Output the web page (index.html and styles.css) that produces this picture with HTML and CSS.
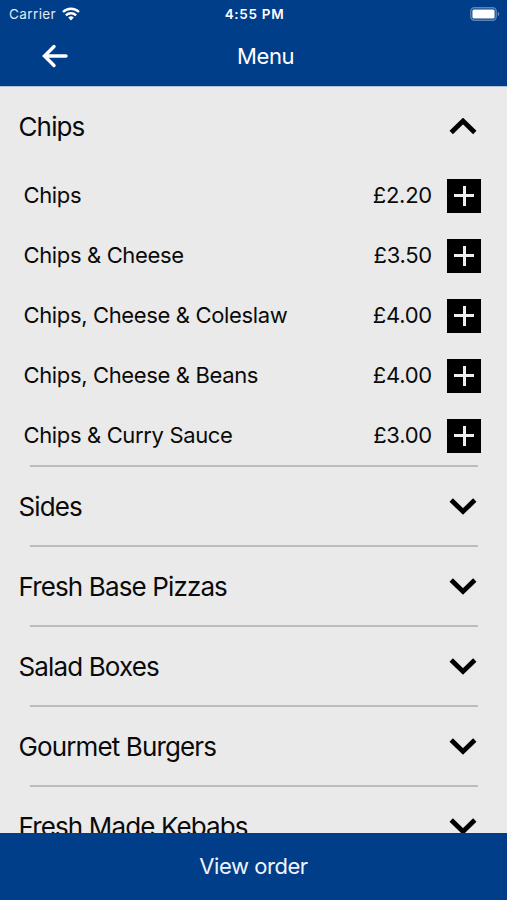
FILE: index.html
```html
<!DOCTYPE html>
<html lang="en">
<head>
  <meta charset="UTF-8" />
  <meta name="viewport" content="width=device-width, initial-scale=1.0" />
  <title>Menu</title>
  <link rel="stylesheet" href="styles.css">
</head>
<body>
  <header>
    <div class="status-bar">
      <div class="carrier">
        <span>Carrier</span>
        <svg class="wifi" viewBox="0 0 18 14" fill="none" stroke="#fff" stroke-width="2.4">
          <path d="M1 5a11.5 11.5 0 0 1 16 0M3.9 8.3a7.2 7.2 0 0 1 10.2 0" />
          <path d="M6.2 10.6a4 4 0 0 1 5.600 0L9 13.6z" fill="#fff" stroke="none" />
        </svg>
      </div>
      <span class="time">4:55 PM</span>
      <svg class="battery" viewBox="0 0 30 14">
        <rect x="0.8" y="0.8" width="25.4" height="12.4" rx="3.6" fill="none" stroke="#5d84b7" stroke-width="1.4" />
        <rect x="2.4" y="2.4" width="22.2" height="9.2" rx="1.5" fill="#fff" />
        <path d="M27.800 4.800c2 .8 2 3.600 0 4.400z" fill="#6f92c0" />
      </svg>
    </div>
    <div class="title-bar">
      <svg class="back" viewBox="0 0 26 24" fill="none" stroke="#fff" stroke-width="3.4" stroke-linecap="round">
        <path d="M24 12H3M12 2.500L2.500 12l9.500 9.500" />
      </svg>
      <h1>Menu</h1>
    </div>
  </header>

  <main>
    <section class="open">
      <div class="category">
        <h2>Chips</h2>
        <svg class="chevron" viewBox="0 0 28 18"><path d="M2.200 14.500L14 3l11.800 11.500" /></svg>
      </div>
      <ul class="items">
        <li><span class="name">Chips</span><span class="price">£2.20</span><button class="add" aria-label="Add"></button></li>
        <li><span class="name">Chips &amp; Cheese</span><span class="price">£3.50</span><button class="add" aria-label="Add"></button></li>
        <li><span class="name">Chips, Cheese &amp; Coleslaw</span><span class="price">£4.00</span><button class="add" aria-label="Add"></button></li>
        <li><span class="name">Chips, Cheese &amp; Beans</span><span class="price">£4.00</span><button class="add" aria-label="Add"></button></li>
        <li><span class="name">Chips &amp; Curry Sauce</span><span class="price">£3.00</span><button class="add" aria-label="Add"></button></li>
      </ul>
    </section>
    <section>
      <div class="category">
        <h2>Sides</h2>
        <svg class="chevron" viewBox="0 0 28 18"><path d="M2.200 3L14 14.500 25.800 3" /></svg>
      </div>
    </section>
    <section>
      <div class="category">
        <h2>Fresh Base Pizzas</h2>
        <svg class="chevron" viewBox="0 0 28 18"><path d="M2.200 3L14 14.500 25.800 3" /></svg>
      </div>
    </section>
    <section>
      <div class="category">
        <h2>Salad Boxes</h2>
        <svg class="chevron" viewBox="0 0 28 18"><path d="M2.200 3L14 14.500 25.800 3" /></svg>
      </div>
    </section>
    <section>
      <div class="category">
        <h2>Gourmet Burgers</h2>
        <svg class="chevron" viewBox="0 0 28 18"><path d="M2.200 3L14 14.500 25.800 3" /></svg>
      </div>
    </section>
    <section>
      <div class="category">
        <h2>Fresh Made Kebabs</h2>
        <svg class="chevron" viewBox="0 0 28 18"><path d="M2.200 3L14 14.500 25.800 3" /></svg>
      </div>
    </section>
  </main>

  <button class="view-order">View order</button>
</body>
</html>
```

FILE: styles.css
```css
/* Global reset and body styling */
* { box-sizing: border-box; margin: 0; padding: 0; }
body { height: 900px; display: flex; flex-direction: column; overflow: hidden; font-family: Inter, "Liberation Sans", sans-serif; background: #eaeaea; color: #0a0a0a; }
svg { display: block; flex: none; }
button { border: none; font-family: inherit; cursor: pointer; }

/* Header */
header { flex: none; height: 87px; background: #003e8a; color: #fff; border-bottom: 1px solid #b3c3d8; }
.status-bar { height: 27px; padding: 0 7px 0 9px; display: grid; grid-template-columns: 1fr auto 1fr; align-items: center; font-size: 13.5px; }
.carrier { display: flex; align-items: center; gap: 6px; letter-spacing: 0.4px; color: #e3eaf3; }
.wifi { width: 18px; height: 14px; }
.time { font-weight: 600; letter-spacing: 0.7px; }
.battery { width: 30px; height: 14px; justify-self: end; }
.title-bar { height: 58px; padding: 0 42px; display: flex; align-items: center; }
.title-bar h1 { margin-left: 169px; font-size: 22px; font-weight: 400; letter-spacing: -0.4px; }
.back { width: 26px; height: 24px; }

/* Menu list */
main { flex: 1; min-height: 0; overflow: hidden; }
section { height: 80px; display: flex; flex-direction: column; }
section.open { height: 380px; }
section::after { content: ""; margin: auto 29px 0 30px; height: 2px; background: #bcbcbc; }
.category { flex: none; height: 78px; padding: 0 30px 0 18.5px; display: flex; justify-content: space-between; align-items: center; }
.open .category { height: 79px; }
.category h2 { font-size: 26px; font-weight: 400; letter-spacing: -0.87px; white-space: nowrap; }
.chevron { width: 28px; height: 18px; fill: none; stroke: #000; stroke-width: 4.8; }

/* Menu items */
.items { height: 299px; list-style: none; }
.items li { height: 59.9px; padding: 0 26px 0 23.5px; display: flex; align-items: center; font-size: 22px; letter-spacing: -0.36px; }
.name { padding-bottom: 1px; white-space: nowrap; }
.price { margin-left: auto; margin-right: 15px; padding-bottom: 1px; letter-spacing: -0.25px; }
.add { width: 34px; height: 34px; background: linear-gradient(#eee, #eee) center / 20px 3px no-repeat, linear-gradient(#eee, #eee) center / 3px 20px no-repeat, #000; }

/* Footer button */
.view-order { flex: none; height: 67px; padding-bottom: 1px; background: #003e8a; color: #f0f4fa; font-size: 22px; letter-spacing: -0.45px; }
```
